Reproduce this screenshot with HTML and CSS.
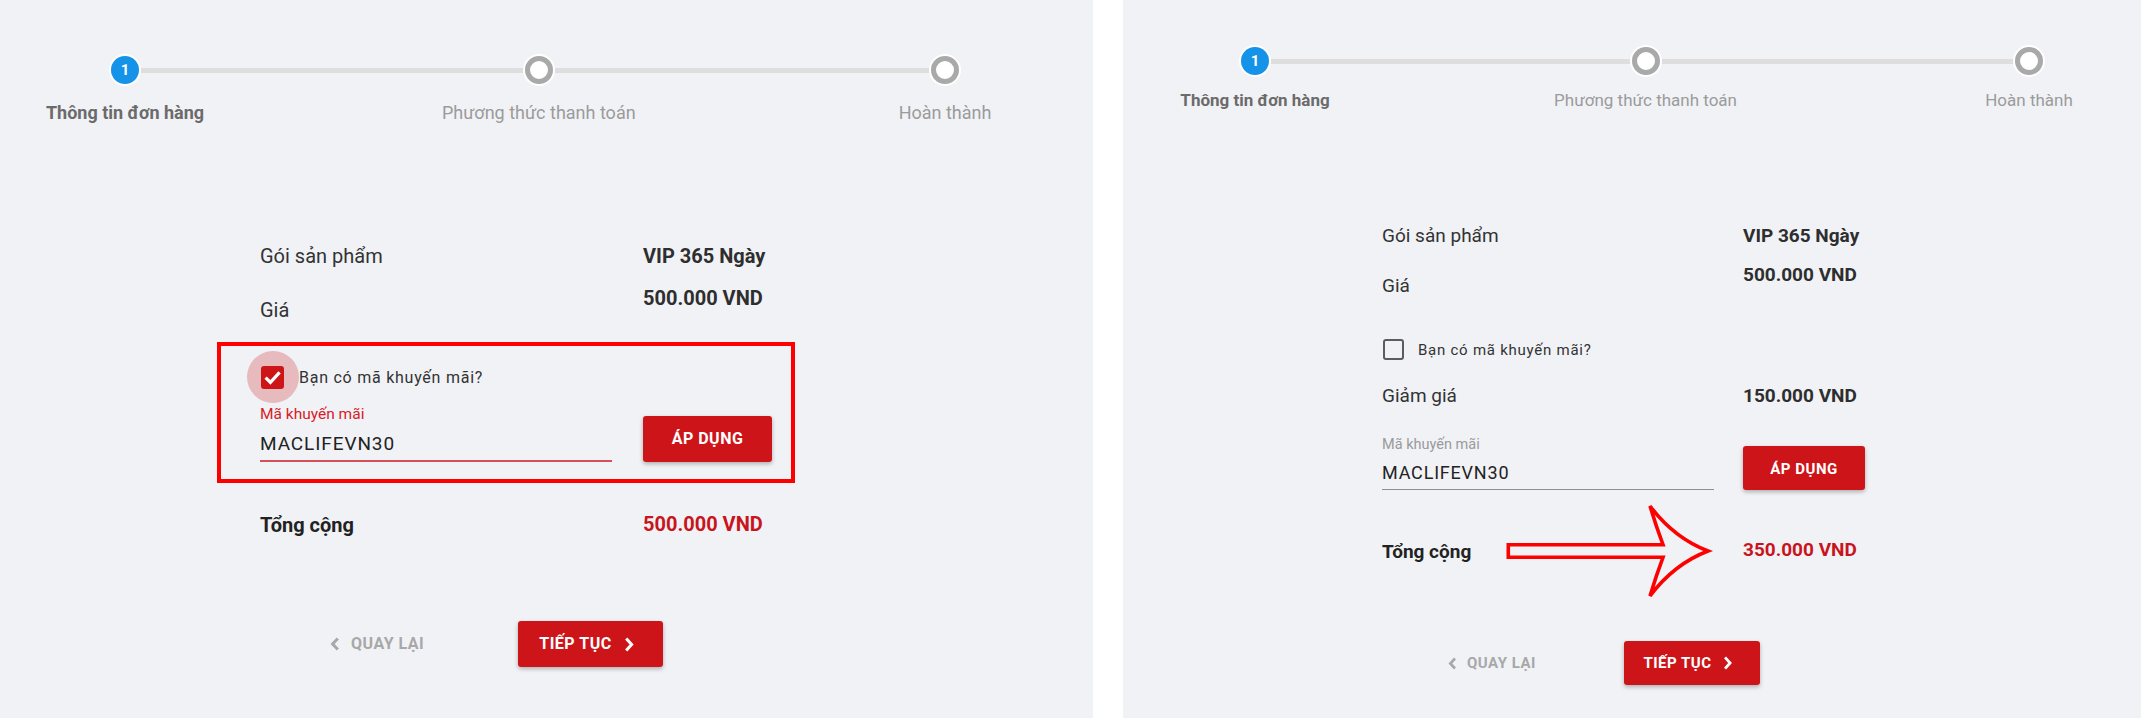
FILE: index.html
```html
<!DOCTYPE html>
<html lang="vi">
<head>
<meta charset="utf-8">
<title>Thông tin đơn hàng</title>
<link rel="stylesheet" href="styles.css">
</head>
<body>
<div class="page">
  <section class="panel panel--a">
    <div class="stepper">
      <div class="step step--active">
        <span class="step__dot">1</span>
        <span class="step__label">Thông tin đơn hàng</span>
      </div>
      <span class="step__line step__line--first"></span>
      <div class="step">
        <span class="step__dot"></span>
        <span class="step__label">Phương thức thanh toán</span>
      </div>
      <span class="step__line"></span>
      <div class="step">
        <span class="step__dot"></span>
        <span class="step__label">Hoàn thành</span>
      </div>
    </div>

    <div class="summary">
      <div class="row">
        <span class="row__label">Gói sản phẩm</span>
        <span class="row__value">VIP 365 Ngày</span>
      </div>
      <div class="row row--offset">
        <span class="row__label">Giá</span>
        <span class="row__value">500.000 VND</span>
      </div>
      <div class="promo promo--highlight">
        <div class="check check--on">
          <span class="check__control">
            <span class="check__halo"></span>
            <span class="check__box">
              <svg class="check__mark" viewBox="0 0 23 23" width="23" height="23"><polyline points="4.6,11.6 9.4,16.4 18.6,6.4" fill="none" stroke="#fff" stroke-width="3.2"/></svg>
            </span>
          </span>
          <span class="check__text">Bạn có mã khuyến mãi?</span>
        </div>
        <div class="code-row">
          <div class="field field--focus">
            <span class="field__label">Mã khuyến mãi</span>
            <span class="field__input">MACLIFEVN30</span>
          </div>
          <button class="btn btn--apply" type="button">ÁP DỤNG</button>
        </div>
      </div>
      <div class="row row--total">
        <span class="row__label">Tổng cộng</span>
        <span class="row__value">500.000 VND</span>
      </div>
    </div>

    <div class="actions">
      <a class="back">
        <svg class="back__icon" viewBox="0 0 10 14" width="10" height="14"><polyline points="7.8,1.5 2.6,7 7.8,12.5" fill="none" stroke="#a8a8a8" stroke-width="3"/></svg>
        <span>QUAY LẠI</span>
      </a>
      <button class="btn btn--next" type="button">
        <span>TIẾP TỤC</span>
        <svg class="btn__chevron" viewBox="0 0 10 15" width="10" height="15"><polyline points="2.2,1.5 7.6,7.5 2.2,13.5" fill="none" stroke="#fff" stroke-width="3"/></svg>
      </button>
    </div>
  </section>

  <div class="gutter"></div>

  <section class="panel panel--b">
    <div class="stepper">
      <div class="step step--active">
        <span class="step__dot">1</span>
        <span class="step__label">Thông tin đơn hàng</span>
      </div>
      <span class="step__line step__line--first"></span>
      <div class="step">
        <span class="step__dot"></span>
        <span class="step__label">Phương thức thanh toán</span>
      </div>
      <span class="step__line"></span>
      <div class="step">
        <span class="step__dot"></span>
        <span class="step__label">Hoàn thành</span>
      </div>
    </div>

    <div class="summary">
      <div class="row">
        <span class="row__label">Gói sản phẩm</span>
        <span class="row__value">VIP 365 Ngày</span>
      </div>
      <div class="row row--offset">
        <span class="row__label">Giá</span>
        <span class="row__value">500.000 VND</span>
      </div>
      <div class="check">
        <span class="check__control">
          <span class="check__box"></span>
        </span>
        <span class="check__text">Bạn có mã khuyến mãi?</span>
      </div>
      <div class="row row--discount">
        <span class="row__label">Giảm giá</span>
        <span class="row__value">150.000 VND</span>
      </div>
      <div class="code-row">
        <div class="field">
          <span class="field__label">Mã khuyến mãi</span>
          <span class="field__input">MACLIFEVN30</span>
        </div>
        <button class="btn btn--apply" type="button">ÁP DỤNG</button>
      </div>
      <div class="row row--total">
        <span class="row__label">Tổng cộng</span>
        <span class="row__value">350.000 VND</span>
      </div>
    </div>

    <div class="actions">
      <a class="back">
        <svg class="back__icon" viewBox="0 0 10 14" width="9" height="13"><polyline points="7.8,1.5 2.6,7 7.8,12.5" fill="none" stroke="#a8a8a8" stroke-width="3"/></svg>
        <span>QUAY LẠI</span>
      </a>
      <button class="btn btn--next" type="button">
        <span>TIẾP TỤC</span>
        <svg class="btn__chevron" viewBox="0 0 10 15" width="9.3" height="14"><polyline points="2.2,1.5 7.6,7.5 2.2,13.5" fill="none" stroke="#fff" stroke-width="3"/></svg>
      </button>
    </div>

    <svg class="annotation-arrow" viewBox="0 0 220 110" width="220" height="110">
      <path d="M8.3,46.7 H163 Q156,28 150,8 Q174,40 208,53 Q174,66 150,98 Q156,78 163,59.3 H8.3 Z" fill="none" stroke="#ff0000" stroke-width="3.6" stroke-linejoin="miter"/>
    </svg>
  </section>
</div>
</body>
</html>
```

FILE: styles.css
```css
* { box-sizing: border-box; }

html, body {
  margin: 0;
  padding: 0;
}

body {
  font-family: Roboto, "Liberation Sans", Arial, sans-serif;
  background: #ffffff;
  color: #333333;
}

.page {
  display: flex;
  width: 2141px;
  height: 718px;
}

.panel {
  position: relative;
  height: 100%;
  background: #f1f2f6;
  display: flex;
  flex-direction: column;
}

.panel--a { width: 1093px; }
.panel--b { width: 1018px; }

.gutter {
  width: 30px;
  background: #ffffff;
}

/* ---------- stepper ---------- */
.stepper {
  display: flex;
  align-items: flex-start;
}

.panel--a .stepper {
  margin-left: 111px;
  width: 848px;
  padding-top: 56px;
}

.panel--b .stepper {
  margin-left: 118px;
  width: 802px;
  padding-top: 47px;
}

.step {
  flex: none;
  width: 28px;
  display: flex;
  flex-direction: column;
  align-items: center;
}

.step__dot {
  position: relative;
  z-index: 1;
  width: 28px;
  height: 28px;
  border-radius: 50%;
  background: #ffffff;
  border: 5px solid #a9a9a9;
  box-shadow: 0 0 0 2px #ffffff;
}

.step--active .step__dot {
  border: 0;
  background: #1593e8;
  color: #ffffff;
  font-size: 15px;
  font-weight: 700;
  display: flex;
  align-items: center;
  justify-content: center;
}

.step__line {
  flex: 1 1 0;
  height: 5px;
  margin-top: 11.5px;
  background: #dedede;
}

.step__line--first { flex-grow: 1.02; }

.step__label {
  white-space: nowrap;
  color: #9b9b9b;
}

.panel--a .step__label {
  margin-top: 17px;
  font-size: 18px;
  line-height: 24px;
}

.panel--b .step__label {
  margin-top: 14px;
  font-size: 17px;
  line-height: 22px;
}

.step--active .step__label {
  color: #6b6b6b;
  font-weight: 700;
}

/* ---------- summary ---------- */
.summary {
  display: flex;
  flex-direction: column;
}

.panel--a .summary {
  margin-left: 260px;
  width: 512px;
  margin-top: 116px;
}

.panel--b .summary {
  margin-left: 259px;
  width: 483px;
  margin-top: 110.5px;
}

.row,
.code-row {
  display: grid;
}

.panel--a .row,
.panel--a .code-row { grid-template-columns: 383px 129px; }

.panel--b .row,
.panel--b .code-row { grid-template-columns: 361px 122px; }

.panel--a .row { font-size: 20px; line-height: 30px; }
.panel--b .row { font-size: 19px; line-height: 28px; }

.row__label { color: #333333; }

.row__value {
  font-weight: 700;
  color: #2e2e2e;
  white-space: nowrap;
}

.panel--a .row--offset { margin-top: 12px; }
.panel--a .row--offset .row__label { padding-top: 12px; }
.panel--b .row--offset { margin-top: 11px; }
.panel--b .row--offset .row__label { padding-top: 11px; }

.panel--b .row--discount { margin-top: 18px; }

.row--total .row__label {
  font-weight: 700;
  color: #222222;
  padding-top: 1.5px;
}

.row--total .row__value { color: #c8151d; }

.panel--a .row--total { margin-top: 25.5px; }
.panel--b .row--total { margin-top: 46px; }

/* ---------- promo block ---------- */
.promo--highlight {
  border: 4px solid #ff0000;
  margin: 17px -23px 0 -43px;
  padding: 16px 19px 17.5px 39px;
}

.check {
  display: flex;
  align-items: center;
  color: #333333;
  letter-spacing: 0.75px;
}

.panel--a .check {
  height: 30px;
  gap: 15px;
  font-size: 16px;
}

.panel--b .check {
  height: 28px;
  gap: 14px;
  font-size: 15px;
  margin-top: 36px;
}

.check__control {
  position: relative;
  display: flex;
  margin-left: 1px;
}

.check__halo {
  position: absolute;
  left: 50%;
  top: 50%;
  width: 52px;
  height: 52px;
  margin: -26px 0 0 -26px;
  border-radius: 50%;
  background: rgba(205, 21, 25, 0.25);
}

.check__box {
  position: relative;
  display: flex;
  border-radius: 3px;
}

.panel--a .check__box {
  width: 23px;
  height: 23px;
  background: #cc1419;
}

.panel--b .check__box {
  width: 21px;
  height: 21px;
  border: 2px solid #5c5c5c;
}

.code-row { align-items: end; }
.panel--b .code-row { margin-top: 25.5px; }

.field__label,
.field__input { display: block; }

.panel--a .field__label {
  margin-top: 11.5px;
  font-size: 15.5px;
  line-height: 20px;
  color: #d81b28;
}

.panel--b .field__label {
  font-size: 14.5px;
  line-height: 20px;
  color: #9a9a9a;
}

.field__input { color: #222222; }

.panel--a .field__input {
  margin-top: 7px;
  width: 352px;
  font-size: 19px;
  line-height: 26px;
  letter-spacing: 0.9px;
  padding-bottom: 3px;
  border-bottom: 2px solid #d4505a;
}

.panel--b .field__input {
  margin-top: 6.3px;
  width: 331.5px;
  font-size: 18px;
  line-height: 24px;
  letter-spacing: 0.8px;
  padding-bottom: 4px;
  border-bottom: 1px solid #8f8f8f;
}

/* ---------- buttons ---------- */
.btn {
  display: flex;
  align-items: center;
  border: 0;
  padding: 0;
  border-radius: 3px;
  background: #cd1519;
  color: #ffffff;
  font-family: inherit;
  font-weight: 700;
  line-height: 20px;
  letter-spacing: 0.5px;
  box-shadow: 0 2px 4px rgba(0, 0, 0, 0.28);
  cursor: pointer;
}

.btn--apply {
  width: 100%;
  justify-content: center;
  padding-top: 1px;
}

.panel--a .btn--apply { height: 46px; font-size: 16px; }
.panel--b .btn--apply { height: 44px; font-size: 15px; }

.actions {
  display: flex;
  align-items: center;
}

.panel--a .actions { margin-left: 330px; margin-top: 80.5px; }
.panel--b .actions { margin-left: 325px; margin-top: 75px; }

.back {
  display: flex;
  align-items: center;
  color: #a8a8a8;
  font-weight: 700;
  line-height: 20px;
  letter-spacing: 0.5px;
  padding-top: 1px;
}

.panel--a .back { gap: 11px; font-size: 16px; }
.panel--b .back { gap: 10px; font-size: 15px; }

.back__icon,
.btn__chevron { display: block; flex: none; }

.btn--next { padding-top: 1px; }

.panel--a .btn--next {
  margin-left: 94px;
  width: 145px;
  height: 46px;
  padding-left: 21px;
  gap: 12px;
  font-size: 16px;
}

.panel--b .btn--next {
  margin-left: 88.5px;
  width: 136px;
  height: 44px;
  padding-left: 19px;
  gap: 11.5px;
  font-size: 15px;
}

/* ---------- annotation ---------- */
.annotation-arrow {
  position: absolute;
  left: 377px;
  top: 498px;
}
```
